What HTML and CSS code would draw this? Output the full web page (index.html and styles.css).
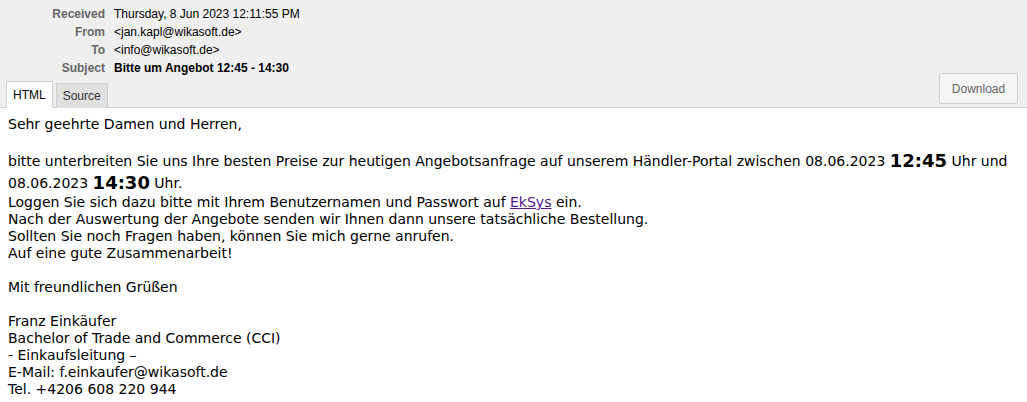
FILE: index.html
```html
<!DOCTYPE html>
<html>
<head>
<meta charset="utf-8">
<link rel="stylesheet" href="styles.css">
</head>
<body>
<div class="header">
  <div class="fields">
    <div class="label">Received</div><div class="value">Thursday, 8 Jun 2023 12:11:55 PM</div>
    <div class="label">From</div><div class="value">&lt;jan.kapl@wikasoft.de&gt;</div>
    <div class="label">To</div><div class="value">&lt;info@wikasoft.de&gt;</div>
    <div class="label">Subject</div><div class="value subject">Bitte um Angebot 12:45 - 14:30</div>
  </div>
  <div class="tabbar">
    <div class="tabs">
      <div class="tab active">HTML</div>
      <div class="tab">Source</div>
    </div>
    <button class="download">Download</button>
  </div>
</div>
<div class="content">
Sehr geehrte Damen und Herren,<br>
<br>
bitte unterbreiten Sie uns Ihre besten Preise zur heutigen Angebotsanfrage auf unserem Händler-Portal zwischen 08.06.2023 <b class="big">12:45</b> Uhr und 08.06.2023 <b class="big">14:30</b> Uhr.<br>
Loggen Sie sich dazu bitte mit Ihrem Benutzernamen und Passwort auf <a href="#">EkSys</a> ein.<br>
Nach der Auswertung der Angebote senden wir Ihnen dann unsere tatsächliche Bestellung.<br>
Sollten Sie noch Fragen haben, können Sie mich gerne anrufen.<br>
Auf eine gute Zusammenarbeit!<br>
<br>
Mit freundlichen Grüßen<br>
<br>
Franz Einkäufer<br>
Bachelor of Trade and Commerce (CCI)<br>
- Einkaufsleitung –<br>
E-Mail: f.einkaufer@wikasoft.de<br>
Tel. +4206 608 220 944
</div>
</body>
</html>
```
FILE: styles.css
```css
html, body {
  margin: 0;
  padding: 0;
  background: #fff;
}
.header {
  background: #efefef;
  border-bottom: 1px solid #cfcfcf;
  font-family: "Liberation Sans", Arial, sans-serif;
  font-size: 12px;
  color: #000;
}
.fields {
  display: grid;
  grid-template-columns: 105px auto;
  column-gap: 9px;
  row-gap: 4px;
  padding-top: 7px;
  line-height: 14px;
}
.label {
  text-align: right;
  color: #666;
  font-weight: bold;
}
.value.subject {
  font-weight: bold;
}
.tabbar {
  display: flex;
  justify-content: space-between;
  align-items: flex-end;
  margin-top: -2px;
  padding: 0 9px 0 6px;
}
.tabs {
  display: flex;
  gap: 3px;
  align-items: flex-end;
  margin-bottom: -1px;
}
.tab {
  border: 1px solid #cfcfcf;
  border-bottom: none;
  background: #e0e0e0;
  color: #333;
  padding: 5px 6px 5px 6px;
  line-height: 14px;
}
.tab.active {
  background: #fff;
  color: #000;
  padding: 6px 6px 5px 6px;
  border-bottom: 1px solid #fff;
}
.download {
  font-family: "Liberation Sans", Arial, sans-serif;
  font-size: 12px;
  color: #666;
  background: #f5f5f5;
  border: 1px solid #cfcfcf;
  border-radius: 2px;
  width: 79px;
  height: 31px;
  padding: 0;
  margin-bottom: 3px;
}
.content {
  font-family: "DejaVu Sans", sans-serif;
  font-size: 14px;
  line-height: 17px;
  padding: 8px 8px;
  color: #000;
}
.big {
  font-size: 18px;
  line-height: 22px;
  vertical-align: -1px;
}
.content a {
  color: #551a8b;
}
```
